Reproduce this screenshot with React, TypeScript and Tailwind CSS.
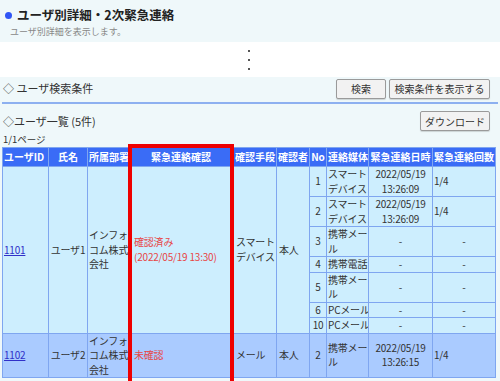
import React from "react";

type Sub = { no: string; media: string[]; date: string[] | null; count: string };

const subs: Sub[] = [
  { no: "1", media: ["スマート", "デバイス"], date: ["2022/05/19", "13:26:09"], count: "1/4" },
  { no: "2", media: ["スマート", "デバイス"], date: ["2022/05/19", "13:26:09"], count: "1/4" },
  { no: "3", media: ["携帯メー", "ル"], date: null, count: "-" },
  { no: "4", media: ["携帯電話"], date: null, count: "-" },
  { no: "5", media: ["携帯メー", "ル"], date: null, count: "-" },
  { no: "6", media: ["PCメール"], date: null, count: "-" },
  { no: "10", media: ["PCメール"], date: null, count: "-" },
];

const td = "border border-[#7fa6f0] px-px py-0 align-middle whitespace-nowrap overflow-hidden";

function Lines({ lines }: { lines: string[] }) {
  return (
    <>
      {lines.map((l, i) => (
        <React.Fragment key={i}>
          {i > 0 && <br />}
          {l}
        </React.Fragment>
      ))}
    </>
  );
}

function Btn({ children, className = "" }: { children: React.ReactNode; className?: string }) {
  return (
    <button
      className={
        "h-[20px] border border-[#9a9a9a] bg-[#f2f2f2] rounded-[2px] text-[10px] text-[#333] shadow-[0_1px_1px_rgba(0,0,0,0.15)] " +
        className
      }
    >
      {children}
    </button>
  );
}

export default function App() {
  const headers: [string, string, string][] = [
    ["ユーザID", "w-[46px]", "text-left"],
    ["氏名", "w-[39px]", "text-center"],
    ["所属部署", "w-[41px]", "text-left"],
    ["緊急連絡確認", "w-[105px]", "text-center"],
    ["確認手段", "w-[43px]", "text-left"],
    ["確認者", "w-[33px]", "text-left"],
    ["No", "w-[17px]", "text-center"],
    ["連絡媒体", "w-[42px]", "text-left"],
    ["緊急連絡日時", "w-[64px]", "text-center"],
    ["緊急連絡回数", "w-[63px]", "text-center"],
  ];

  return (
    <div
      className="w-[500px] h-[381px] overflow-hidden bg-[#eff8fa] text-[#333]"
      style={{ fontFamily: '"Noto Sans CJK JP", "Noto Sans", sans-serif' }}
    >
      {/* title */}
      <div className="h-[42px] px-[5px] pt-[5px]">
        <div className="flex items-center gap-[5px]">
          <span className="w-[7px] h-[7px] rounded-full bg-[#3056f5]" />
          <span className="text-[12.5px] font-bold leading-[20px] text-[#222]">ユーザ別詳細・2次緊急連絡</span>
        </div>
        <div className="pl-[5px] text-[9px] leading-[14px] text-[#888]">ユーザ別詳細を表示します。</div>
      </div>

      {/* collapsed area */}
      <div className="h-[35px] bg-white flex justify-center items-center">
        <div className="flex flex-col gap-[7px] ml-[-2px]">
          <span className="w-[2px] h-[2px] bg-[#555]" />
          <span className="w-[2px] h-[2px] bg-[#555]" />
          <span className="w-[2px] h-[2px] bg-[#555]" />
        </div>
      </div>

      {/* search */}
      <div className="flex items-center justify-between pl-[3px] pr-[10px] pt-[1px] h-[22px]">
        <span className="text-[11px]">◇ ユーザ検索条件</span>
        <div className="flex gap-[3px]">
          <Btn className="w-[50px]">検索</Btn>
          <Btn className="w-[101px]">検索条件を表示する</Btn>
        </div>
      </div>
      <div className="mx-[2px] mt-[3px] h-[2px] bg-[#8db0f0]" />

      <div className="flex items-center justify-between pl-[3px] pr-[10px] mt-[7px] h-[20px]">
        <span className="text-[11px]">◇ユーザ一覧 (5件)</span>
        <Btn className="w-[70px]">ダウンロード</Btn>
      </div>
      <div className="pl-[3px] text-[9.5px] leading-[16px]">1/1ページ</div>

      <div className="relative pl-[2px]">
        <table className="border-collapse text-[10px] leading-[14.5px] tracking-[-0.2px] table-fixed w-[493px]">
          <thead>
            <tr className="bg-[#3a6cf6] text-white h-[19px]">
              {headers.map(([h, w, a]) => (
                <th key={h} className={`${td} ${w} ${a} font-bold tracking-normal`}>
                  {h}
                </th>
              ))}
            </tr>
          </thead>
          <tbody>
            {subs.map((s, i) => (
              <tr key={s.no} className="bg-[#cdeefe]">
                {i === 0 && (
                  <>
                    <td rowSpan={7} className={td}>
                      <a className="text-[#3030c8] underline">1101</a>
                    </td>
                    <td rowSpan={7} className={`${td} text-center`}>ユーザ1</td>
                    <td rowSpan={7} className={td}>
                      <Lines lines={["インフォ", "コム株式", "会社"]} />
                    </td>
                    <td rowSpan={7} className={`${td} pl-[5px] text-[#e84545]`}>
                      確認済み
                      <br />
                      (2022/05/19 13:30)
                    </td>
                    <td rowSpan={7} className={`${td} pl-[2px]`}>
                      <Lines lines={["スマート", "デバイス"]} />
                    </td>
                    <td rowSpan={7} className={`${td} pl-[2px]`}>本人</td>
                  </>
                )}
                <td className={`${td} text-center`}>{s.no}</td>
                <td className={td}>
                  <Lines lines={s.media} />
                </td>
                <td className={`${td} text-center`}>{s.date ? <Lines lines={s.date} /> : "-"}</td>
                <td className={`${td} ${s.date ? "text-left" : "text-center"}`}>{s.count}</td>
              </tr>
            ))}
            <tr className="bg-[#aacbff]">
              <td className={td}>
                <a className="text-[#3030c8] underline">1102</a>
              </td>
              <td className={`${td} text-center`}>ユーザ2</td>
              <td className={td}>
                <Lines lines={["インフォ", "コム株式", "会社"]} />
              </td>
              <td className={`${td} pl-[5px] text-[#e84545]`}>未確認</td>
              <td className={`${td} pl-[2px]`}>メール</td>
              <td className={`${td} pl-[2px]`}>本人</td>
              <td className={`${td} text-center`}>2</td>
              <td className={td}>
                <Lines lines={["携帯メー", "ル"]} />
              </td>
              <td className={`${td} text-center`}>
                <Lines lines={["2022/05/19", "13:26:15"]} />
              </td>
              <td className={td}>1/4</td>
            </tr>
          </tbody>
        </table>
        <div className="absolute left-[128px] top-[-3px] w-[106px] h-[260px] border-[4px] border-[#ee0000] pointer-events-none" />
      </div>
    </div>
  );
}
